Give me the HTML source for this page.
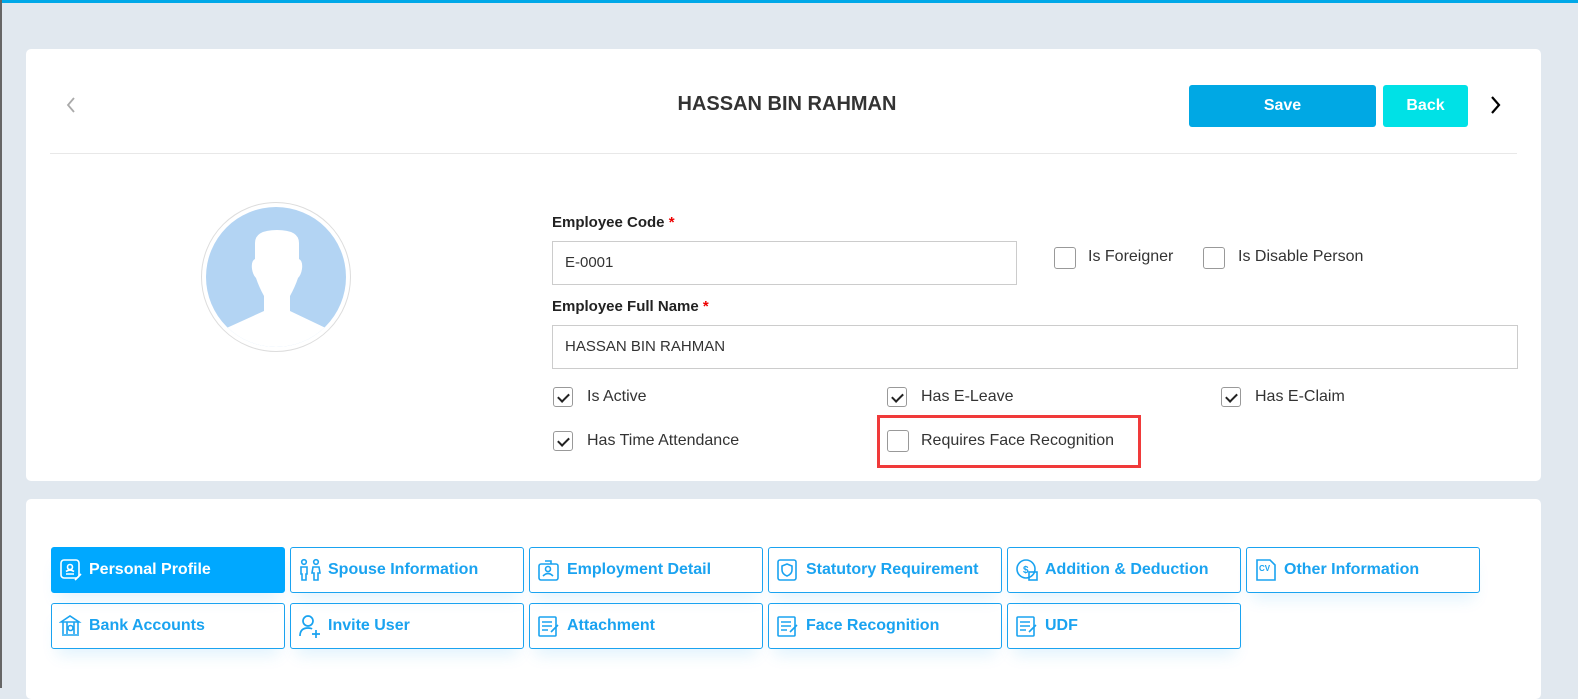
<!DOCTYPE html>
<html><head><style>
*{box-sizing:border-box;margin:0;padding:0}
body{width:1578px;height:688px;overflow:hidden;background:#e1e8ef;font-family:"Liberation Sans",sans-serif;position:relative;color:#333}
.top{position:absolute;left:0;top:0;width:1578px;height:3px;background:#00a8e8}
.ledge{position:absolute;left:0;top:0;width:2px;height:688px;background:#666}
.card{position:absolute;left:26px;width:1515px;background:#fff;border-radius:5px}
.abs{position:absolute}
.btn{position:absolute;color:#fff;font-weight:bold;font-size:16px;text-align:center;line-height:42px;border-radius:3px}
.lbl{position:absolute;font-weight:bold;font-size:15px;color:#222}
.lbl b{color:#e00}
.inp{position:absolute;border:1px solid #ccc;font-size:15px;padding-left:12px;color:#333}
.cb{position:absolute;width:20px;height:20px;border:1px solid #999;border-radius:3px;background:#fff}
.cb.on::after{content:"";position:absolute;left:6px;top:3px;width:5px;height:9px;border:solid #222;border-width:0 2px 2px 0;transform:rotate(45deg)}
.ct{position:absolute;font-size:16px;color:#333}
.tab{position:absolute;width:234px;height:46px;border:1px solid #1aa3f0;border-radius:3px;color:#1aa3f0;font-weight:bold;font-size:16px;line-height:44px;padding-left:37px;box-shadow:0 12px 16px -6px rgba(0,160,240,.12)}
.tab.act{background:#00a8ff;color:#fff;border-color:#00a8ff}
.tab svg{position:absolute;left:7px;top:10px}
</style></head><body>
<div class="top"></div><div class="ledge"></div>
<div class="card" style="top:49px;height:432px"></div>
<div class="card" style="top:499px;height:200px"></div>

<svg class="abs" style="left:65px;top:96px" width="14" height="20"><path d="M9 2 L3 9 L9 16" stroke="#aaa" stroke-width="1.8" fill="none"/></svg>
<div class="abs" style="left:587px;top:93px;width:400px;text-align:center;font-weight:bold;font-size:20px;color:#333">HASSAN BIN RAHMAN</div>
<div class="btn" style="left:1189px;top:85px;width:187px;background:#00a8e4">Save</div>
<div class="btn" style="left:1383px;top:85px;width:85px;background:#00e1e6">Back</div>
<svg class="abs" style="left:1489px;top:95px" width="14" height="20"><path d="M3 2 L10 10 L3 18" stroke="#000" stroke-width="2.2" fill="none"/></svg>
<div class="abs" style="left:50px;top:153px;width:1467px;height:1px;background:#e8e8e8"></div>

<svg class="abs" style="left:200px;top:201px" width="152" height="152">
<circle cx="76" cy="76" r="74.5" fill="#fff" stroke="#ddd" stroke-width="1"/>
<clipPath id="c"><circle cx="76" cy="76" r="70"/></clipPath>
<circle cx="76" cy="76" r="70" fill="#b3d4f3"/>
<path clip-path="url(#c)" d="M55 42 Q55 29 77 29 Q99 29 99 42 L99 58 Q103 60 102 68 Q101 74 98 77 Q95 86 90 95 L90 110 L132 130 L132 160 L20 160 L20 130 L64 110 L64 95 Q59 86 56 77 Q53 74 52 68 Q51 60 55 58 Z" fill="#fff"/>
</svg>

<div class="lbl" style="left:552px;top:214px">Employee Code <b>*</b></div>
<div class="inp" style="left:552px;top:241px;width:465px;height:44px;line-height:42px">E-0001</div>
<div class="cb" style="left:1054px;top:247px;width:22px;height:22px"></div><div class="ct" style="left:1088px;top:248px">Is Foreigner</div>
<div class="cb" style="left:1203px;top:247px;width:22px;height:22px"></div><div class="ct" style="left:1238px;top:248px">Is Disable Person</div>
<div class="lbl" style="left:552px;top:298px">Employee Full Name <b>*</b></div>
<div class="inp" style="left:552px;top:325px;width:966px;height:44px;line-height:42px">HASSAN BIN RAHMAN</div>

<div class="cb on" style="left:553px;top:387px"></div><div class="ct" style="left:587px;top:388px">Is Active</div>
<div class="cb on" style="left:887px;top:387px"></div><div class="ct" style="left:921px;top:388px">Has E-Leave</div>
<div class="cb on" style="left:1221px;top:387px"></div><div class="ct" style="left:1255px;top:388px">Has E-Claim</div>
<div class="cb on" style="left:553px;top:431px"></div><div class="ct" style="left:587px;top:432px">Has Time Attendance</div>
<div class="cb" style="left:887px;top:430px;width:22px;height:22px"></div><div class="ct" style="left:921px;top:432px">Requires Face Recognition</div>
<div class="abs" style="left:877px;top:415px;width:264px;height:53px;border:3px solid #f03a3a"></div>

<div class="tab act" style="left:51px;top:547px"><svg width="24" height="24" fill="none" stroke="#fff" stroke-width="1.6"><rect x="2" y="2" width="18" height="18" rx="3"/><circle cx="11" cy="9" r="2.5"/><path d="M7 16h8M7 13.5q4-3 8 0M16 22l6-6"/></svg>Personal Profile</div>
<div class="tab" style="left:290px;top:547px"><svg width="26" height="24" fill="none" stroke="#1aa3f0" stroke-width="1.6"><circle cx="6" cy="4" r="2.3"/><circle cx="18" cy="4" r="2.3"/><path d="M3 9h6v7H8v6H4v-6H3zM15 9h6l1 6h-2v7h-4v-7h-2z"/></svg>Spouse Information</div>
<div class="tab" style="left:529px;top:547px"><svg width="24" height="24" fill="none" stroke="#1aa3f0" stroke-width="1.6"><rect x="2" y="6" width="19" height="16" rx="2"/><circle cx="11" cy="11" r="2.5"/><path d="M8 3h6v3M6 18q5-5 10 0"/></svg>Employment Detail</div>
<div class="tab" style="left:768px;top:547px"><svg width="24" height="24" fill="none" stroke="#1aa3f0" stroke-width="1.6"><rect x="2" y="2" width="18" height="20" rx="2"/><path d="M11 6l5 2v4q0 4-5 6q-5-2-5-6V8z"/></svg>Statutory Requirement</div>
<div class="tab" style="left:1007px;top:547px"><svg width="24" height="24" fill="none" stroke="#1aa3f0" stroke-width="1.6"><circle cx="11" cy="11" r="9"/><text x="8" y="15" font-size="10" fill="#1aa3f0" stroke="none">$</text><rect x="14" y="14" width="8" height="8"/></svg>Addition &amp; Deduction</div>
<div class="tab" style="left:1246px;top:547px"><svg width="24" height="24" fill="none" stroke="#1aa3f0" stroke-width="1.6"><path d="M3 2h13l5 5v15H3z"/><text x="5" y="13" font-size="8" font-weight="bold" fill="#1aa3f0" stroke="none">CV</text></svg>Other Information</div>

<div class="tab" style="left:51px;top:603px"><svg width="24" height="24" fill="none" stroke="#1aa3f0" stroke-width="1.6"><path d="M2 8L11 2l9 6zM3 21h17M4 8v12M8 8v12M15 8v12M19 8v12"/><circle cx="11.5" cy="14" r="2.5"/></svg>Bank Accounts</div>
<div class="tab" style="left:290px;top:603px"><svg width="26" height="24" fill="none" stroke="#1aa3f0" stroke-width="1.7"><circle cx="10" cy="7" r="5"/><path d="M2 22q0-8 8-8q3 0 4 1M14 20h8M18 16v8"/></svg>Invite User</div>
<div class="tab" style="left:529px;top:603px"><svg width="24" height="24" fill="none" stroke="#1aa3f0" stroke-width="1.6"><rect x="2" y="3" width="17" height="19" rx="1"/><path d="M5 8h10M5 12h10M5 16h6M14 18l7-7"/></svg>Attachment</div>
<div class="tab" style="left:768px;top:603px"><svg width="24" height="24" fill="none" stroke="#1aa3f0" stroke-width="1.6"><rect x="2" y="3" width="17" height="19" rx="1"/><path d="M5 8h10M5 12h10M5 16h6M14 18l7-7"/></svg>Face Recognition</div>
<div class="tab" style="left:1007px;top:603px"><svg width="24" height="24" fill="none" stroke="#1aa3f0" stroke-width="1.6"><rect x="2" y="3" width="17" height="19" rx="1"/><path d="M5 8h10M5 12h10M5 16h6M14 18l7-7"/></svg>UDF</div>
</body></html>
